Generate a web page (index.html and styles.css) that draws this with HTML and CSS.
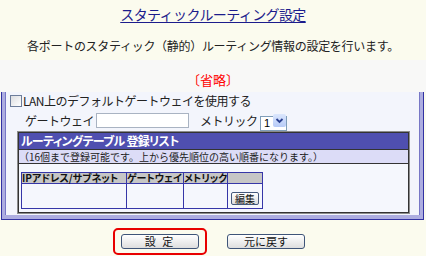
FILE: index.html
```html
<!DOCTYPE html>
<html lang="ja">
<head>
    <meta charset="UTF-8">
    <meta name="viewport" content="width=device-width, initial-scale=1.0">
    <title>スタティックルーティング設定</title>
    <link rel="stylesheet" href="styles.css">
</head>
<body>
    <div class="top">
        <h1 class="title"><span>スタティックルーティング設定</span></h1>
        <p class="lead">各ポートのスタティック（静的）ルーティング情報の設定を行います。</p>
    </div>
    <div class="omit">〔省略〕</div>

    <div class="panel">
        <label class="check-row">
            <input type="checkbox" class="cb">LAN上のデフォルトゲートウェイを使用する
        </label>
        <div class="gw-row">
            <span class="gw-label">ゲートウェイ</span>
            <input type="text" class="gw-input">
            <span class="metric-label">メトリック</span>
            <span class="select-wrap">
                <select class="metric">
                    <option>1</option>
                </select>
                <span class="arrow">
                    <svg width="13" height="13" viewBox="0 0 13 13">
                        <path d="M3.5 5 L6.5 8 L9.5 5" fill="none" stroke="#2a3f8f" stroke-width="1.8"/>
                    </svg>
                </span>
            </span>
        </div>

        <div class="rt">
            <div class="rt-head">ルーティングテーブル 登録リスト</div>
            <div class="rt-note">（16個まで登録可能です。上から優先順位の高い順番になります。）</div>
            <div class="rt-body">
                <table class="list">
                    <colgroup>
                        <col class="c-ip">
                        <col class="c-gw">
                        <col class="c-mt">
                        <col class="c-ed">
                    </colgroup>
                    <tr>
                        <th>IPアドレス/サブネット</th>
                        <th>ゲートウェイ</th>
                        <th>メトリック</th>
                        <th></th>
                    </tr>
                    <tr>
                        <td></td>
                        <td></td>
                        <td></td>
                        <td class="edit-cell"><button class="btn-edit">編集</button></td>
                    </tr>
                </table>
            </div>
        </div>
    </div>

    <div class="actions">
        <div class="highlight">
            <button class="btn btn-set">設 定</button>
        </div>
        <button class="btn btn-reset">元に戻す</button>
    </div>
</body>
</html>
```

FILE: styles.css
```css
body {
    margin: 0;
    padding: 0;
    width: 426px;
    height: 256px;
    background-color: #fbfbee;
    font-family: "Noto Sans CJK JP", "DejaVu Sans", sans-serif;
    color: #222;
    overflow: hidden;
}

/* 見出し */
.top {
    height: 60px;
    padding-top: 5px;
    box-sizing: border-box;
    text-align: center;
}
.title {
    margin: 0;
    font-size: 14px;
    line-height: 18px;
    font-weight: normal;
    letter-spacing: -0.6px;
    color: #1c1c8c;
}
.title span {
    text-decoration: underline;
    text-underline-offset: 2px;
}
.lead {
    margin: 16px 0 0 0;
    font-size: 12px;
    line-height: 14px;
    letter-spacing: -0.3px;
}

.omit {
    height: 32px;
    padding-top: 13px;
    box-sizing: border-box;
    background-color: #f8f8f7;
    color: #ff0000;
    font-size: 13px;
    line-height: 14px;
    text-align: center;
}

/* 設定パネル */
.panel {
    margin-left: 1px;
    width: 423px;
    box-sizing: border-box;
    background-color: #f3f5fc;
    border: 1px solid #3232a2;
    border-top: none;
    padding-top: 1px;
    box-shadow: inset 3px 0 0 #adade0, inset -3px 0 0 #adade0, inset 0 -4px 0 #adade0,
                inset 4px 0 0 #7777c6, inset -4px 0 0 #7777c6;
}

.check-row {
    display: flex;
    align-items: center;
    height: 15px;
    padding-left: 8px;
    font-size: 12px;
    letter-spacing: -0.5px;
}
.cb {
    appearance: none;
    margin: 0 1px 0 0;
    width: 12px;
    height: 12px;
    border: 1px solid #6d7d9a;
    background: linear-gradient(135deg, #dcdde0, #ffffff);
    box-sizing: border-box;
}

.gw-row {
    display: flex;
    align-items: center;
    height: 15px;
    margin-top: 5px;
    padding-left: 23px;
    font-size: 12px;
    letter-spacing: -0.5px;
}
.gw-label {
    width: 71px;
    white-space: nowrap;
}
.gw-input {
    width: 93px;
    height: 15px;
    box-sizing: border-box;
    margin: 0;
    border: 1px solid #a9b3c2;
    background: #fff;
}
.metric-label {
    margin-left: 11px;
    width: 60px;
    white-space: nowrap;
}
.select-wrap {
    position: relative;
    display: inline-block;
    height: 15px;
}
.metric {
    appearance: none;
    width: 27px;
    height: 15px;
    margin: 0;
    padding: 0 0 0 3px;
    border: 1px solid #7f9db9;
    border-radius: 0;
    background: #fff;
    font-family: "Liberation Sans", sans-serif;
    font-size: 11px;
    color: #000;
}
.arrow {
    position: absolute;
    top: 1px;
    right: 1px;
    width: 13px;
    height: 13px;
    background: linear-gradient(#dbe6fd, #b7cbf7);
    border-radius: 2px;
}
.arrow svg {
    display: block;
}

/* ルーティングテーブル */
.rt {
    margin: 4px 14px 6px 16px;
    border: 1px solid #333;
    outline: 1px solid #8c8c8c;
    background-color: #f5f7fd;
}
.rt-head {
    height: 16px;
    line-height: 16px;
    padding-left: 2px;
    background-color: #4f4fb0;
    border-bottom: 1px solid #333;
    color: #fff;
    font-size: 12px;
    font-weight: bold;
    font-feature-settings: "palt";
    letter-spacing: -0.7px;
    white-space: nowrap;
}
.rt-note {
    height: 13px;
    line-height: 13px;
    background-color: #dcdcf7;
    border-bottom: 1px solid #333;
    font-size: 10px;
    white-space: nowrap;
}
.rt-body {
    padding: 8px 0 3px 2px;
}

.list {
    border-collapse: collapse;
    table-layout: fixed;
    width: 242px;
}
.c-ip { width: 105px; }
.c-gw { width: 57px; }
.c-mt { width: 44px; }
.c-ed { width: 35px; }
.list th,
.list td {
    border: 1px solid #3636a8;
    padding: 0;
}
.list th {
    height: 10px;
    line-height: 10px;
    background-color: #c6c6c6;
    font-size: 10px;
    font-weight: bold;
    font-feature-settings: "palt";
    text-align: left;
    white-space: nowrap;
    color: #111;
}
.list td {
    height: 24px;
}
.edit-cell {
    vertical-align: bottom;
    text-align: center;
    padding-bottom: 2px;
}
.btn-edit {
    width: 28px;
    height: 13px;
    margin: 0 0 2px 0;
    padding: 0;
    border: 1px solid #45597c;
    border-radius: 2px;
    background: linear-gradient(#ffffff, #dcdcdc);
    font-family: "Noto Sans CJK JP", sans-serif;
    font-size: 10px;
    line-height: 11px;
    color: #111;
}

/* ボタン */
.actions {
    display: flex;
    align-items: center;
    margin-top: 8px;
    padding-left: 113px;
}
.highlight {
    padding: 4px 6px;
    border: 2px solid #e80000;
    border-radius: 5px;
}
.btn {
    display: block;
    width: 78px;
    height: 15px;
    margin: 0;
    padding: 0;
    border: 1px solid #3e5478;
    border-radius: 3px;
    background: linear-gradient(#ffffff, #dedede);
    font-family: "Noto Sans CJK JP", sans-serif;
    font-size: 11px;
    line-height: 13px;
    color: #111;
}
.btn-set {
    letter-spacing: 2px;
}
.btn-reset {
    margin-left: 20px;
}
```
